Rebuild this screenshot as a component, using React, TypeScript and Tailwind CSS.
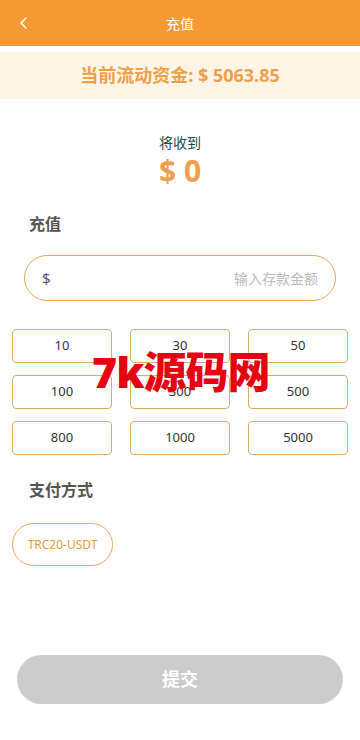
import { useState } from "react";

const amounts = [10, 30, 50, 100, 300, 500, 800, 1000, 5000];

export default function App() {
  const [value, setValue] = useState("");

  return (
    <div
      className="relative flex min-h-[740px] w-[360px] flex-col bg-white"
      style={{ fontFamily: '"Noto Sans", "Noto Sans CJK SC", sans-serif' }}
    >
      {/* header */}
      <div className="relative flex h-[46px] items-center justify-center bg-[#f79a36]">
        <button className="absolute left-[12px] top-[11px] flex h-6 w-6 items-center justify-center text-white">
          <svg width="14" height="14" viewBox="0 0 14 14" fill="none">
            <path d="M9 2 4 7l5 5" stroke="#fff" strokeWidth="1.6" strokeLinecap="round" strokeLinejoin="round" />
          </svg>
        </button>
        <span className="text-[14px] text-white">充值</span>
      </div>

      <div className="mt-[6px] flex h-[47px] items-center justify-center bg-[#fff5e6]">
        <span className="text-[18px] font-bold text-[#f0a04a]">当前流动资金: $ 5063.85</span>
      </div>

      <div className="mt-[35px] flex flex-col items-center">
        <span className="text-[14px] leading-[18px] text-[#1d4a4d]">将收到</span>
        <span className="text-[30px] font-bold leading-[38px] text-[#f0a04a]">$ 0</span>
      </div>

      <div className="mt-[23px] px-[29px] text-[16px] font-bold leading-[22px] text-[#555]">充值</div>

      <div className="mx-[24px] mt-[20px] flex h-[46px] items-center rounded-full border border-[#e8a95a] px-[17px]">
        <span className="text-[15px] text-[#555]">$</span>
        <input
          value={value}
          onChange={(e) => setValue(e.target.value)}
          placeholder="输入存款金额"
          className="ml-2 min-w-0 flex-1 bg-transparent text-right text-[14px] text-[#333] outline-none placeholder:text-[#bbb]"
        />
      </div>

      <div className="mt-[28px] grid grid-cols-3 gap-x-[18px] gap-y-[12px] px-[12px]">
        {amounts.map((a) => (
          <button
            key={a}
            onClick={() => setValue(String(a))}
            className="flex h-[34px] items-center justify-center rounded-[4px] border border-[#e0aa6c] bg-white text-[13px] text-[#333]"
          >
            {a}
          </button>
        ))}
      </div>

      <div className="mt-[24px] px-[29px] text-[16px] font-bold leading-[22px] text-[#555]">支付方式</div>

      <div className="mt-[22px] px-[12px]">
        <button className="flex h-[43px] w-[101px] items-center justify-center rounded-full border border-[#e8a95a] text-[12px] text-[#e39a48]">
          TRC20-USDT
        </button>
      </div>

      <div className="mt-[89px] px-[17px]">
        <button className="flex h-[49px] w-full items-center justify-center rounded-full bg-[#cccccc] text-[18px] font-bold text-white">
          提交
        </button>
      </div>

      {/* watermark */}
      <div className="pointer-events-none absolute left-[92px] top-[344px] text-[43px] font-black leading-[56px] tracking-[-1px] text-[#e60012]">
        7k源码网
      </div>
    </div>
  );
}
